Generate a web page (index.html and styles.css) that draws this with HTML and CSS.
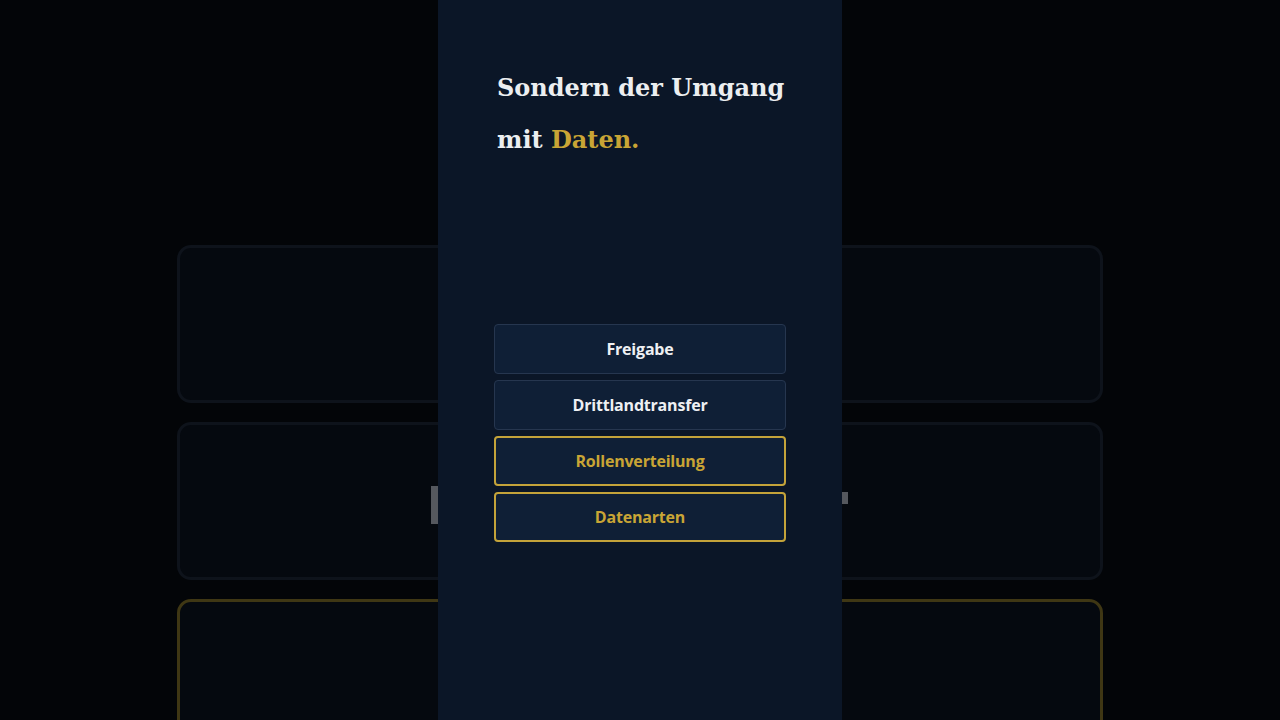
FILE: index.html
```html
<!DOCTYPE html>
<html lang="de">
<head>
<meta charset="utf-8">
<link rel="stylesheet" href="styles.css">
</head>
<body>
<div class="stage">
  <div class="backdrop">
    <div class="bg-card"></div>
    <div class="bg-card"></div>
    <div class="bg-card bg-card--gold"></div>
  </div>
  <span class="ghost ghost--left"></span>
  <span class="ghost ghost--right"></span>
  <main class="panel">
    <h1 class="title">Sondern der Umgang<br>mit <span class="accent">Daten.</span></h1>
    <div class="options">
      <div class="option">Freigabe</div>
      <div class="option">Drittlandtransfer</div>
      <div class="option option--selected">Rollenverteilung</div>
      <div class="option option--selected">Datenarten</div>
    </div>
  </main>
</div>
</body>
</html>
```
FILE: styles.css
```css
html, body {
  margin: 0;
  padding: 0;
  width: 1280px;
  height: 720px;
  overflow: hidden;
  background: #030508;
}
.stage {
  position: relative;
  width: 1280px;
  height: 720px;
  overflow: hidden;
}
.backdrop {
  display: flex;
  flex-direction: column;
  gap: 19px;
  padding: 245px 177px 0 177px;
}
.bg-card {
  height: 152px;
  border: 3px solid #0e131b;
  border-radius: 14px;
  background: #05090f;
  flex: none;
}
.bg-card--gold {
  border-color: #3f3714;
  height: 200px;
}
.ghost {
  position: absolute;
  background: #55585e;
}
.ghost--left {
  left: 431px;
  top: 486px;
  width: 7px;
  height: 38px;
}
.ghost--right {
  left: 842px;
  top: 492px;
  width: 6px;
  height: 12px;
}
.panel {
  position: absolute;
  left: 438px;
  top: 0;
  width: 404px;
  height: 720px;
  box-sizing: border-box;
  background: #0b1627;
  padding: 62px 56px 0 56px;
}
.title {
  margin: 0 0 0 3px;
  font-family: "DejaVu Serif", "Liberation Serif", serif;
  font-weight: bold;
  font-size: 24px;
  line-height: 52px;
  color: #eceef0;
  white-space: nowrap;
  letter-spacing: 0;
}
.accent {
  color: #c9a535;
}
.options {
  margin-top: 158px;
  display: flex;
  flex-direction: column;
  gap: 6px;
}
.option {
  height: 50px;
  box-sizing: border-box;
  border: 1px solid #26364f;
  border-radius: 4px;
  background: #0f1f36;
  display: flex;
  align-items: center;
  justify-content: center;
  font-family: "Open Sans", "Noto Sans", sans-serif;
  font-weight: bold;
  font-size: 16px;
  color: #eef0f3;
  letter-spacing: -0.2px;
}
.option--selected {
  border: 2px solid #c4a33a;
  color: #c9a535;
}
```
